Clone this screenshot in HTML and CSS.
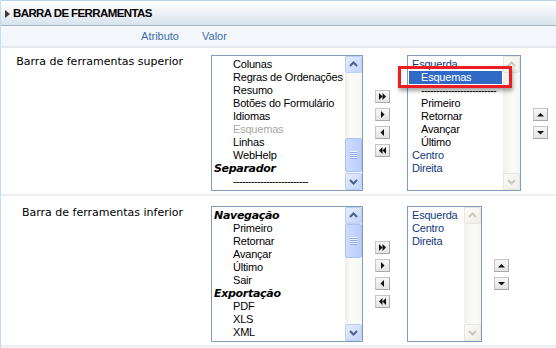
FILE: index.html
```html
<!DOCTYPE html>
<html>
<head>
<meta charset="utf-8">
<link rel="stylesheet" href="styles.css">
</head>
<body>
<div class="panel">
  <div class="header"><span class="tri"></span><span class="title">BARRA DE FERRAMENTAS</span></div>
  <div class="colhead"><div class="ch-attr">Atributo</div><div class="ch-val">Valor</div></div>

  <div class="row row-top">
    <div class="label">Barra de ferramentas superior</div>
    <div class="value">
      <div class="listbox lb-wide">
        <div class="items">
          <div class="opt sub">Colunas</div>
          <div class="opt sub">Regras de Ordenações</div>
          <div class="opt sub">Resumo</div>
          <div class="opt sub">Botões do Formulário</div>
          <div class="opt sub">Idiomas</div>
          <div class="opt sub dis">Esquemas</div>
          <div class="opt sub">Linhas</div>
          <div class="opt sub">WebHelp</div>
          <div class="opt grp">Separador</div>
          <div class="opt sub dash">-------------------------</div>
        </div>
        <div class="sbar">
          <div class="sbtn"><svg width="15" height="15" viewBox="0 0 15 15"><polyline points="4,9 7.5,5.5 11,9" fill="none" stroke="#4d6185" stroke-width="2"/></svg></div>
          <div class="strack"><div class="thumb thumb-low"><svg width="7" height="8" viewBox="0 0 7 8"><rect y="0" width="7" height="1" fill="#eef3fe"/><rect y="1" width="7" height="1" fill="#8ea8ea"/><rect y="2" width="7" height="1" fill="#eef3fe"/><rect y="3" width="7" height="1" fill="#8ea8ea"/><rect y="4" width="7" height="1" fill="#eef3fe"/><rect y="5" width="7" height="1" fill="#8ea8ea"/><rect y="6" width="7" height="1" fill="#eef3fe"/><rect y="7" width="7" height="1" fill="#8ea8ea"/></svg></div></div>
          <div class="sbtn"><svg width="15" height="15" viewBox="0 0 15 15"><polyline points="4,6 7.5,9.5 11,6" fill="none" stroke="#4d6185" stroke-width="2"/></svg></div>
        </div>
      </div>
      <div class="movebtns">
        <div class="btn"><svg width="13" height="11" viewBox="0 0 13 11"><polygon points="3,2 6.5,5.5 3,9" fill="#111"/><polygon points="6.5,2 10,5.5 6.5,9" fill="#111"/></svg></div>
        <div class="btn"><svg width="13" height="11" viewBox="0 0 13 11"><polygon points="5,2 8.5,5.5 5,9" fill="#111"/></svg></div>
        <div class="btn"><svg width="13" height="11" viewBox="0 0 13 11"><polygon points="8,2 4.5,5.5 8,9" fill="#111"/></svg></div>
        <div class="btn"><svg width="13" height="11" viewBox="0 0 13 11"><polygon points="6.5,2 3,5.5 6.5,9" fill="#111"/><polygon points="10,2 6.5,5.5 10,9" fill="#111"/></svg></div>
      </div>
      <div class="lbwrap">
        <div class="listbox lb-mid">
          <div class="items">
            <div class="opt top">Esquerda</div>
            <div class="opt sel">Esquemas</div>
            <div class="opt child dash">-------------------------</div>
            <div class="opt child">Primeiro</div>
            <div class="opt child">Retornar</div>
            <div class="opt child">Avançar</div>
            <div class="opt child">Último</div>
            <div class="opt top">Centro</div>
            <div class="opt top">Direita</div>
          </div>
          <div class="sbar sbar-dis">
            <div class="sbtn"><svg width="15" height="15" viewBox="0 0 15 15"><polyline points="4,9 7.5,5.5 11,9" fill="none" stroke="#cac8bc" stroke-width="2"/></svg></div>
            <div class="strack"></div>
            <div class="sbtn"><svg width="15" height="15" viewBox="0 0 15 15"><polyline points="4,6 7.5,9.5 11,6" fill="none" stroke="#cac8bc" stroke-width="2"/></svg></div>
          </div>
        </div>
        <div class="hl"></div>
      </div>
      <div class="orderbtns">
        <div class="btn"><svg width="13" height="11" viewBox="0 0 13 11"><polygon points="3,7.5 6.5,4 10,7.5" fill="#111"/></svg></div>
        <div class="btn"><svg width="13" height="11" viewBox="0 0 13 11"><polygon points="3,4 6.5,7.5 10,4" fill="#111"/></svg></div>
      </div>
    </div>
  </div>

  <div class="row row-bottom">
    <div class="label">Barra de ferramentas inferior</div>
    <div class="value">
      <div class="listbox lb-wide">
        <div class="items">
          <div class="opt grp">Navegação</div>
          <div class="opt sub">Primeiro</div>
          <div class="opt sub">Retornar</div>
          <div class="opt sub">Avançar</div>
          <div class="opt sub">Último</div>
          <div class="opt sub">Sair</div>
          <div class="opt grp">Exportação</div>
          <div class="opt sub">PDF</div>
          <div class="opt sub">XLS</div>
          <div class="opt sub">XML</div>
        </div>
        <div class="sbar">
          <div class="sbtn"><svg width="15" height="15" viewBox="0 0 15 15"><polyline points="4,9 7.5,5.5 11,9" fill="none" stroke="#4d6185" stroke-width="2"/></svg></div>
          <div class="strack"><div class="thumb"><svg width="7" height="8" viewBox="0 0 7 8"><rect y="0" width="7" height="1" fill="#eef3fe"/><rect y="1" width="7" height="1" fill="#8ea8ea"/><rect y="2" width="7" height="1" fill="#eef3fe"/><rect y="3" width="7" height="1" fill="#8ea8ea"/><rect y="4" width="7" height="1" fill="#eef3fe"/><rect y="5" width="7" height="1" fill="#8ea8ea"/><rect y="6" width="7" height="1" fill="#eef3fe"/><rect y="7" width="7" height="1" fill="#8ea8ea"/></svg></div></div>
          <div class="sbtn"><svg width="15" height="15" viewBox="0 0 15 15"><polyline points="4,6 7.5,9.5 11,6" fill="none" stroke="#4d6185" stroke-width="2"/></svg></div>
        </div>
      </div>
      <div class="movebtns">
        <div class="btn"><svg width="13" height="11" viewBox="0 0 13 11"><polygon points="3,2 6.5,5.5 3,9" fill="#111"/><polygon points="6.5,2 10,5.5 6.5,9" fill="#111"/></svg></div>
        <div class="btn"><svg width="13" height="11" viewBox="0 0 13 11"><polygon points="5,2 8.5,5.5 5,9" fill="#111"/></svg></div>
        <div class="btn"><svg width="13" height="11" viewBox="0 0 13 11"><polygon points="8,2 4.5,5.5 8,9" fill="#111"/></svg></div>
        <div class="btn"><svg width="13" height="11" viewBox="0 0 13 11"><polygon points="6.5,2 3,5.5 6.5,9" fill="#111"/><polygon points="10,2 6.5,5.5 10,9" fill="#111"/></svg></div>
      </div>
      <div class="listbox lb-narrow">
        <div class="items">
          <div class="opt top">Esquerda</div>
          <div class="opt top">Centro</div>
          <div class="opt top">Direita</div>
        </div>
        <div class="sbar sbar-dis">
          <div class="sbtn"><svg width="15" height="15" viewBox="0 0 15 15"><polyline points="4,9 7.5,5.5 11,9" fill="none" stroke="#cac8bc" stroke-width="2"/></svg></div>
          <div class="strack"></div>
          <div class="sbtn"><svg width="15" height="15" viewBox="0 0 15 15"><polyline points="4,6 7.5,9.5 11,6" fill="none" stroke="#cac8bc" stroke-width="2"/></svg></div>
        </div>
      </div>
      <div class="orderbtns">
        <div class="btn"><svg width="13" height="11" viewBox="0 0 13 11"><polygon points="3,7.5 6.5,4 10,7.5" fill="#111"/></svg></div>
        <div class="btn"><svg width="13" height="11" viewBox="0 0 13 11"><polygon points="3,4 6.5,7.5 10,4" fill="#111"/></svg></div>
      </div>
    </div>
  </div>
</div>
</body>
</html>
```

FILE: styles.css
```css
* { box-sizing: border-box; }
html, body { margin: 0; padding: 0; background: #f3f6fb; }
body {
  font-family: "Liberation Sans", Arial, sans-serif;
  font-size: 11px;
  color: #000;
}
.panel {
  width: 556px;
  height: 348px;
  border-left: 1px solid #c9dbf0;
  background: #f3f6fb;
  overflow: hidden;
}
.header {
  height: 26px;
  border-top: 1px solid #b7d4f0;
  border-bottom: 1px solid #a8b4c1;
  background: linear-gradient(#ffffff, #f3f6f9 35%, #d8e3ed);
  display: flex;
  align-items: center;
  padding-left: 4px;
}
.tri {
  width: 0;
  height: 0;
  border-left: 5px solid #3a3a3a;
  border-top: 4.5px solid transparent;
  border-bottom: 4.5px solid transparent;
  margin-top: 1px;
}
.title {
  margin-left: 3px;
  font-weight: bold;
  font-size: 11.5px;
  letter-spacing: -0.6px;
  color: #000;
}
.colhead {
  height: 22px;
  border-bottom: 2px solid #e6e9ef;
  background: #f3f6fb;
  display: flex;
  line-height: 20px;
  color: #3d6fa8;
}
.ch-attr { width: 178px; text-align: right; }
.ch-val { padding-left: 23px; }

.row {
  display: flex;
  background: #fff;
  border-bottom: 2px solid #eceef3;
}
.row-top { padding: 7px 0 3px; }
.row-bottom { padding: 10px 0 3px; }
.label {
  width: 210px;
  padding-right: 28px;
  text-align: right;
  font-family: "DejaVu Sans", sans-serif;
  font-size: 11px;
  line-height: 13px;
  color: #000;
}
.value { display: flex; align-items: center; }

.listbox {
  height: 136px;
  border: 1px solid #7f9db9;
  background: #fff;
  display: flex;
}
.lb-wide { width: 152px; }
.lb-mid { width: 114px; }
.lb-narrow { width: 75px; }
.items {
  flex: 1;
  min-width: 0;
  overflow: hidden;
  padding-top: 2px;
}
.opt {
  height: 13px;
  line-height: 13px;
  white-space: nowrap;
  letter-spacing: -0.2px;
}
.sub { padding-left: 21px; }
.grp {
  padding-left: 2px;
  font-family: "DejaVu Sans", sans-serif;
  font-weight: bold;
  font-style: italic;
  font-size: 11px;
  letter-spacing: -0.3px;
}
.dis { color: #a8a8a8; }
.dash { letter-spacing: -0.66px; }
.top { padding-left: 4px; color: #14387f; }
.child { padding-left: 13px; }
.sel {
  margin: 0 1px;
  padding-left: 12px;
  background: #316ac5;
  color: #fff;
}

.sbar {
  width: 17px;
  display: flex;
  flex-direction: column;
  background: linear-gradient(90deg, #eeede6, #fbfbf8 30%, #f6f6f2);
}
.sbtn {
  width: 17px;
  height: 17px;
  border: 1px solid #bccdf8;
  border-radius: 2px;
  background: linear-gradient(135deg, #e4ecfe, #c3d3fb);
  flex: none;
}
.sbtn svg { display: block; }
.strack { flex: 1; display: flex; flex-direction: column; }
.thumb {
  height: 34px;
  border: 1px solid #adc2f4;
  border-radius: 2px;
  background: linear-gradient(90deg, #cddbfd, #bacdfa);
  display: flex;
  align-items: center;
  justify-content: center;
}
.thumb svg { display: block; }
.thumb-low { margin-top: 65px; }
.sbar-dis {
  background: linear-gradient(90deg, #f1f0ea, #fcfcfa 60%, #f6f5f1);
}
.sbar-dis .sbtn {
  border-color: #e8e7df;
  background: linear-gradient(135deg, #fafaf7, #efeee8);
}

.movebtns {
  display: flex;
  flex-direction: column;
  gap: 5px;
  margin-left: 12px;
  margin-right: 17px;
}
.orderbtns {
  display: flex;
  flex-direction: column;
  gap: 5px;
  margin-left: 12px;
}
.btn {
  width: 15px;
  height: 13px;
  border: 1px solid #c6c6c6;
  border-right-color: #a9a9a9;
  border-bottom-color: #a9a9a9;
  background: linear-gradient(#f8f8f8, #e3e3e3);
}
.btn svg { display: block; }

.lbwrap { position: relative; }
.hl {
  position: absolute;
  left: -9px;
  top: 11px;
  width: 114px;
  height: 22px;
  border: 3px solid #ec1c24;
  box-shadow: 1px 3px 4px rgba(0, 0, 0, 0.35);
}
```
